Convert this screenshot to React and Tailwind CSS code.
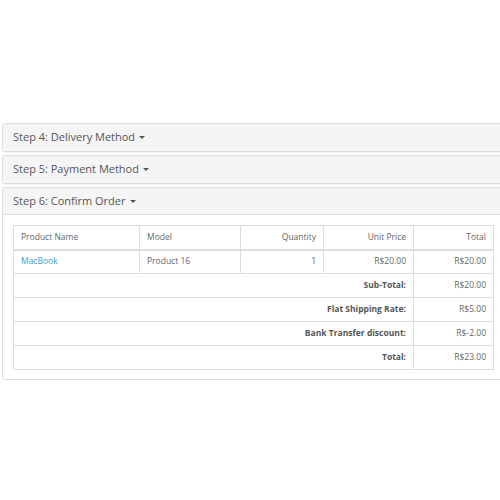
import React from 'react';

const items = [
  { name: 'MacBook', model: 'Product 16', qty: '1', price: 'R$20.00', total: 'R$20.00' },
];

const totals = [
  { label: 'Sub-Total:', value: 'R$20.00' },
  { label: 'Flat Shipping Rate:', value: 'R$5.00' },
  { label: 'Bank Transfer discount:', value: 'R$-2.00' },
  { label: 'Total:', value: 'R$23.00' },
];

function Caret() {
  return <span className="inline-block ml-[4px] align-middle w-0 h-0 border-l-[3px] border-r-[3px] border-t-[3px] border-l-transparent border-r-transparent border-t-[#555]" />;
}

function PanelHeading({ title, last }) {
  return (
    <div className={`h-[27px] flex items-center pl-[10px] bg-[#f5f5f5] border-[#ddd] ${last ? 'border-b' : ''}`}>
      <span className="text-[11px] text-[#555]">{title}</span>
      <Caret />
    </div>
  );
}

export default function App() {
  const cell = 'border border-[#ddd] px-[7px] h-[24px]';
  return (
    <div className="w-[500px] h-[500px] overflow-hidden bg-white pt-[123px] pl-[2px]" style={{ fontFamily: '"Open Sans", "Liberation Sans", sans-serif' }}>
      <div className="w-[502px] flex flex-col gap-[3px]">
        <div className="border border-[#ddd] rounded-[3px] overflow-hidden shadow-[0_1px_1px_rgba(0,0,0,0.05)]">
          <PanelHeading title="Step 4: Delivery Method" />
        </div>
        <div className="border border-[#ddd] rounded-[3px] overflow-hidden shadow-[0_1px_1px_rgba(0,0,0,0.05)]">
          <PanelHeading title="Step 5: Payment Method" />
        </div>
        <div className="border border-[#ddd] rounded-[3px] overflow-hidden">
          <PanelHeading title="Step 6: Confirm Order" last />
          <div className="pt-[10px] pl-[10px] pr-[10px] pb-[9px]">
            <table className="w-[480px] border-collapse text-[8.5px] text-[#666] table-fixed">
              <colgroup>
                <col className="w-[126px]" />
                <col className="w-[101px]" />
                <col className="w-[83px]" />
                <col className="w-[90px]" />
                <col className="w-[80px]" />
              </colgroup>
              <thead>
                <tr className="border-b-2 border-[#ddd]">
                  <td className={`${cell} text-left`}>Product Name</td>
                  <td className={`${cell} text-left`}>Model</td>
                  <td className={`${cell} text-right`}>Quantity</td>
                  <td className={`${cell} text-right`}>Unit Price</td>
                  <td className={`${cell} text-right`}>Total</td>
                </tr>
              </thead>
              <tbody>
                {items.map((it) => (
                  <tr key={it.name}>
                    <td className={`${cell} text-left`}><span className="text-[#3d9bd0]">{it.name}</span></td>
                    <td className={`${cell} text-left`}>{it.model}</td>
                    <td className={`${cell} text-right`}>{it.qty}</td>
                    <td className={`${cell} text-right`}>{it.price}</td>
                    <td className={`${cell} text-right`}>{it.total}</td>
                  </tr>
                ))}
              </tbody>
              <tfoot>
                {totals.map((t) => (
                  <tr key={t.label}>
                    <td colSpan={4} className={`${cell} text-right font-bold text-[#555]`}>{t.label}</td>
                    <td className={`${cell} text-right`}>{t.value}</td>
                  </tr>
                ))}
              </tfoot>
            </table>
          </div>
        </div>
      </div>
    </div>
  );
}
